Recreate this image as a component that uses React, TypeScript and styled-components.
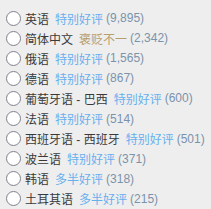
import styled, { createGlobalStyle } from 'styled-components';

const GlobalStyle = createGlobalStyle`
  html, body {
    margin: 0;
    background: #eeeeef;
  }
  body {
    font-family: "Liberation Sans", Arial, "Noto Sans CJK SC", sans-serif;
  }
`;

type Tone = 'positive' | 'mixed';

const languages: { name: string; summary: string; tone: Tone; count: string }[] = [
  { name: '英语', summary: '特别好评', tone: 'positive', count: '9,895' },
  { name: '简体中文', summary: '褒贬不一', tone: 'mixed', count: '2,342' },
  { name: '俄语', summary: '特别好评', tone: 'positive', count: '1,565' },
  { name: '德语', summary: '特别好评', tone: 'positive', count: '867' },
  { name: '葡萄牙语 - 巴西', summary: '特别好评', tone: 'positive', count: '600' },
  { name: '法语', summary: '特别好评', tone: 'positive', count: '514' },
  { name: '西班牙语 - 西班牙', summary: '特别好评', tone: 'positive', count: '501' },
  { name: '波兰语', summary: '特别好评', tone: 'positive', count: '371' },
  { name: '韩语', summary: '多半好评', tone: 'positive', count: '318' },
  { name: '土耳其语', summary: '多半好评', tone: 'positive', count: '215' },
];

const List = styled.div`
  display: flex;
  flex-direction: column;
  padding: 8px 0 0 6px;
`;

const Row = styled.label`
  display: flex;
  align-items: center;
  height: 20.1px;
  font-size: 12px;
  white-space: nowrap;
  cursor: pointer;
`;

const Radio = styled.span`
  flex: none;
  box-sizing: border-box;
  width: 15px;
  height: 15px;
  margin-right: 4px;
  border: 1px solid #80808c;
  border-radius: 50%;
  background: #fff;
`;

const Name = styled.span`
  color: #3a3a3a;
`;

const Summary = styled.span<{ $tone: Tone }>`
  margin-left: 6px;
  color: ${({ $tone }) => ($tone === 'mixed' ? '#b99f6e' : '#66b0ee')};
`;

const Count = styled.span`
  margin-left: 3px;
  color: #7b93aa;
`;

export default function App() {
  return (
    <>
      <GlobalStyle />
      <List>
        {languages.map((l) => (
          <Row key={l.name}>
            <Radio />
            <Name>{l.name}</Name>
            <Summary $tone={l.tone}>{l.summary}</Summary>
            <Count>({l.count})</Count>
          </Row>
        ))}
      </List>
    </>
  );
}
